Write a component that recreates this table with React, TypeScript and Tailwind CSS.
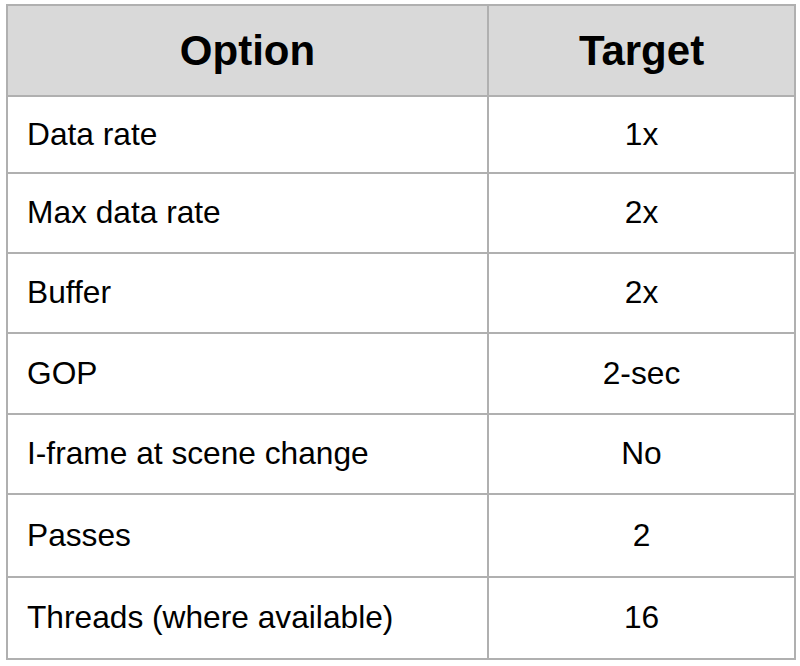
const rows: { option: string; target: string; h: string }[] = [
  { option: "Data rate", target: "1x", h: "h-[77px]" },
  { option: "Max data rate", target: "2x", h: "h-[80px]" },
  { option: "Buffer", target: "2x", h: "h-[80px]" },
  { option: "GOP", target: "2-sec", h: "h-[81px]" },
  { option: "I-frame at scene change", target: "No", h: "h-[80px]" },
  { option: "Passes", target: "2", h: "h-[83px]" },
  { option: "Threads (where available)", target: "16", h: "h-[82px]" },
]

export default function App() {
  return (
    <div className="w-[800px] h-[666px] bg-white pt-[4px] pl-[6px] font-['Liberation_Sans',Arial,sans-serif] text-black">
      <div className="w-[790px] border-2 border-[#b0b0b0]">
        <div className="grid grid-cols-[481px_1fr] h-[89px] bg-[#d9d9d9] text-[42px] font-bold">
          <div className="flex items-center justify-center border-r-2 border-[#b0b0b0]">Option</div>
          <div className="flex items-center justify-center">Target</div>
        </div>
        {rows.map((r) => (
          <div key={r.option} className={`grid grid-cols-[481px_1fr] border-t-2 border-[#b0b0b0] text-[31.7px] ${r.h}`}>
            <div className="flex items-center pl-[19px] border-r-2 border-[#b0b0b0]">{r.option}</div>
            <div className="flex items-center justify-center">{r.target}</div>
          </div>
        ))}
      </div>
    </div>
  )
}
